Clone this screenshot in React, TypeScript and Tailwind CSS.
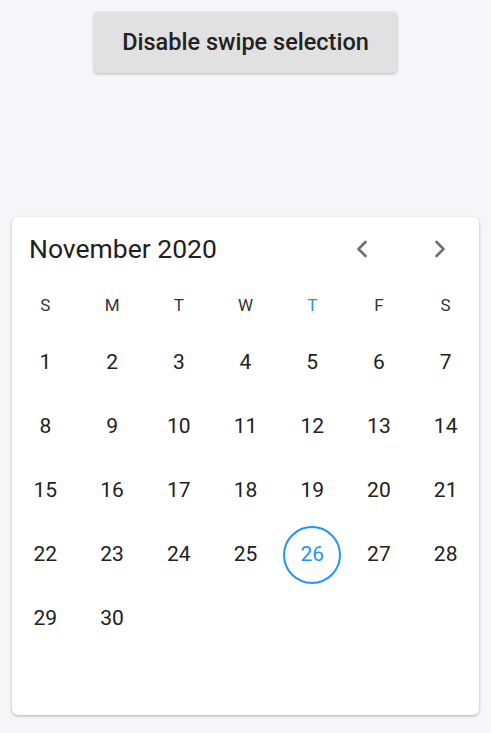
import React from "react";

const weekdays = ["S", "M", "T", "W", "T", "F", "S"];

const weeks: (number | null)[][] = [
  [1, 2, 3, 4, 5, 6, 7],
  [8, 9, 10, 11, 12, 13, 14],
  [15, 16, 17, 18, 19, 20, 21],
  [22, 23, 24, 25, 26, 27, 28],
  [29, 30, null, null, null, null, null],
  [null, null, null, null, null, null, null],
];

const today = 26;

const Chevron = ({ dir }: { dir: "left" | "right" }) => (
  <svg width="24" height="24" viewBox="0 0 24 24" fill="none">
    <path
      d={dir === "left" ? "M15.5 5 8.5 12l7 7" : "M8.5 5l7 7-7 7"}
      stroke="#707070"
      strokeWidth="2.6"
      strokeLinecap="round"
      strokeLinejoin="round"
    />
  </svg>
);

export default function App() {
  return (
    <div
      className="min-h-[733px] w-full bg-[#f6f6f8] pt-3 px-3"
      style={{ fontFamily: "Roboto, 'Liberation Sans', sans-serif" }}
    >
      <div className="flex justify-center">
        <button className="h-[61px] w-[303px] rounded-[4px] bg-[#e1e1e1] text-[23.5px] font-medium text-[#222222] shadow-[0_1px_3px_rgba(0,0,0,0.25)]">
          Disable swipe selection
        </button>
      </div>

      <div className="mt-[144px] rounded-[6px] bg-white shadow-[0_1px_3px_rgba(0,0,0,0.3)]">
        <div className="flex h-[63px] items-center pl-[17px] pr-[27px]">
          <span className="flex-1 text-[26.5px] text-[#212121]">November 2020</span>
          <div className="flex items-center gap-[54px]">
            <Chevron dir="left" />
            <Chevron dir="right" />
          </div>
        </div>

        <div className="grid h-[51px] grid-cols-7 items-center">
          {weekdays.map((d, i) => (
            <span
              key={i}
              className={`text-center text-[17px] ${i === 4 ? "text-[#2196f3]" : "text-[#333333]"}`}
            >
              {d}
            </span>
          ))}
        </div>

        {weeks.map((week, wi) => (
          <div key={wi} className="grid h-[64px] grid-cols-7 items-center">
            {week.map((day, di) => (
              <div key={di} className="flex items-center justify-center">
                {day !== null &&
                  (day === today ? (
                    <span className="flex h-[58px] w-[58px] items-center justify-center rounded-full border-2 border-[#2196f3] text-[21px] text-[#2196f3]">
                      {day}
                    </span>
                  ) : (
                    <span className="text-[21px] text-[#212121]">{day}</span>
                  ))}
              </div>
            ))}
          </div>
        ))}
      </div>
    </div>
  );
}
